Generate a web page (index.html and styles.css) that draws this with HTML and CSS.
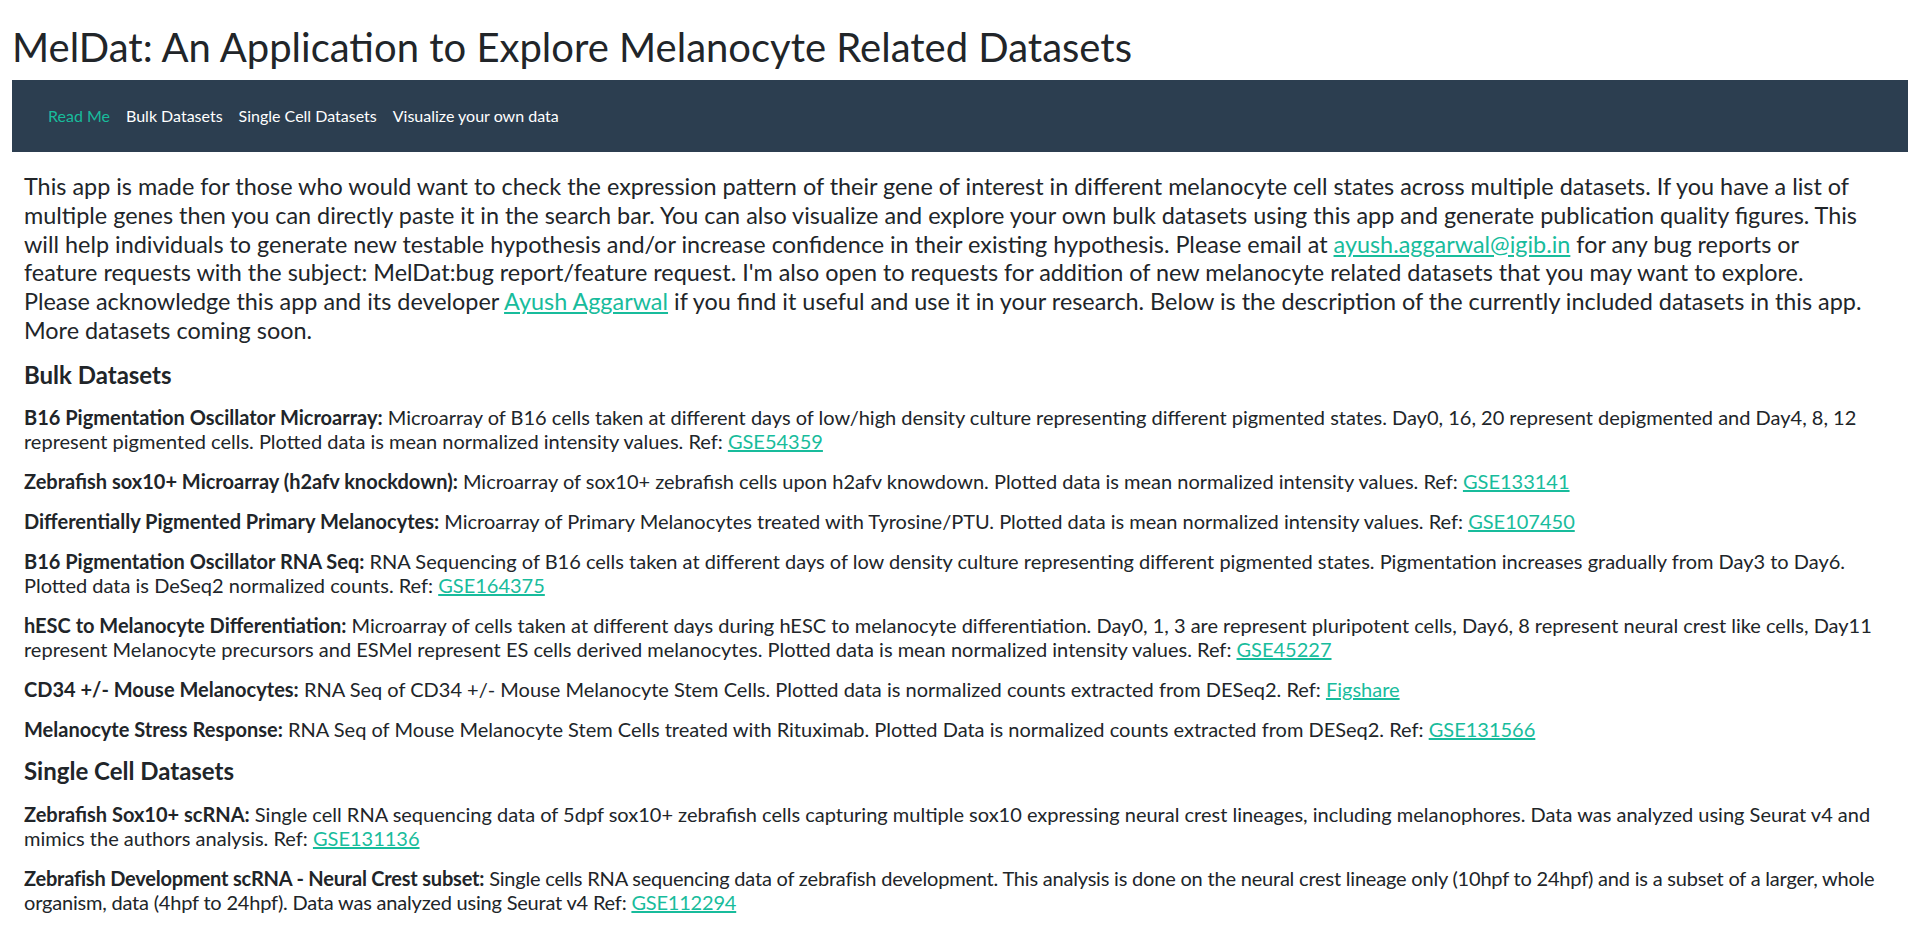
FILE: index.html
```html
<!DOCTYPE html>
<html>
<head>
<meta charset="utf-8">
<title>MelDat</title>
<link rel="stylesheet" href="styles.css">
</head>
<body>
<div class="page">
  <h2 class="title">MelDat: An Application to Explore Melanocyte Related Datasets</h2>
  <nav class="navbar">
    <ul class="nav">
      <li><a class="active">Read Me</a></li>
      <li><a>Bulk Datasets</a></li>
      <li><a>Single Cell Datasets</a></li>
      <li><a>Visualize your own data</a></li>
    </ul>
  </nav>
  <div class="content">
    <p class="intro">This app is made for those who would want to check the expression pattern of their gene of interest in different melanocyte cell states across multiple datasets. If you have a list of multiple genes then you can directly paste it in the search bar. You can also visualize and explore your own bulk datasets using this app and generate publication quality figures. This will help individuals to generate new testable hypothesis and/or increase confidence in their existing hypothesis. Please email at <a href="#">ayush.aggarwal@igib.in</a> for any bug reports or<br>feature requests with the subject: MelDat:bug report/feature request. I'm also open to requests for addition of new melanocyte related datasets that you may want to explore.<br>Please acknowledge this app and its developer <a href="#">Ayush Aggarwal</a> if you find it useful and use it in your research. Below is the description of the currently included datasets in this app.<br>More datasets coming soon.</p>

    <h4 class="section">Bulk Datasets</h4>
    <p><b>B16 Pigmentation Oscillator Microarray:</b> Microarray of B16 cells taken at different days of low/high density culture representing different pigmented states. Day0, 16, 20 represent depigmented and Day4, 8, 12 represent pigmented cells. Plotted data is mean normalized intensity values. Ref: <a href="#">GSE54359</a></p>
    <p><b>Zebrafish sox10+ Microarray (h2afv knockdown):</b> Microarray of sox10+ zebrafish cells upon h2afv knowdown. Plotted data is mean normalized intensity values. Ref: <a href="#">GSE133141</a></p>
    <p><b>Differentially Pigmented Primary Melanocytes:</b> Microarray of Primary Melanocytes treated with Tyrosine/PTU. Plotted data is mean normalized intensity values. Ref: <a href="#">GSE107450</a></p>
    <p><b>B16 Pigmentation Oscillator RNA Seq:</b> RNA Sequencing of B16 cells taken at different days of low density culture representing different pigmented states. Pigmentation increases gradually from Day3 to Day6. Plotted data is DeSeq2 normalized counts. Ref: <a href="#">GSE164375</a></p>
    <p><b>hESC to Melanocyte Differentiation:</b> Microarray of cells taken at different days during hESC to melanocyte differentiation. Day0, 1, 3 are represent pluripotent cells, Day6, 8 represent neural crest like cells, Day11 represent Melanocyte precursors and ESMel represent ES cells derived melanocytes. Plotted data is mean normalized intensity values. Ref: <a href="#">GSE45227</a></p>
    <p><b>CD34 +/- Mouse Melanocytes:</b> RNA Seq of CD34 +/- Mouse Melanocyte Stem Cells. Plotted data is normalized counts extracted from DESeq2. Ref: <a href="#">Figshare</a></p>
    <p><b>Melanocyte Stress Response:</b> RNA Seq of Mouse Melanocyte Stem Cells treated with Rituximab. Plotted Data is normalized counts extracted from DESeq2. Ref: <a href="#">GSE131566</a></p>

    <h4 class="section">Single Cell Datasets</h4>
    <p><b>Zebrafish Sox10+ scRNA:</b> Single cell RNA sequencing data of 5dpf sox10+ zebrafish cells capturing multiple sox10 expressing neural crest lineages, including melanophores. Data was analyzed using Seurat v4 and mimics the authors analysis. Ref: <a href="#">GSE131136</a></p>
    <p class="tight"><b>Zebrafish Development scRNA - Neural Crest subset:</b> Single cells RNA sequencing data of zebrafish development. This analysis is done on the neural crest lineage only (10hpf to 24hpf) and is a subset of a larger, whole organism, data (4hpf to 24hpf). Data was analyzed using Seurat v4 Ref: <a href="#">GSE112294</a></p>
  </div>
</div>
</body>
</html>
```

FILE: styles.css
```css
html, body {
  margin: 0;
  padding: 0;
  background: #ffffff;
}
body {
  font-family: Lato, "Liberation Sans", sans-serif;
  font-size: 20px;
  line-height: 24px;
  color: #212529;
}
.page {
  padding: 0 12px;
}
.title {
  font-size: 40px;
  font-weight: 400;
  line-height: 1.2;
  margin: 0;
  padding-top: 23px;
  padding-bottom: 9px;
}
.navbar {
  background: #2c3e50;
  height: 72px;
  box-sizing: border-box;
  display: flex;
  align-items: center;
  padding: 0 0 0 28px;
}
.nav {
  list-style: none;
  margin: 0;
  padding: 0;
  display: flex;
}
.nav a {
  display: block;
  color: #ffffff;
  font-size: 16px;
  line-height: 24px;
  padding: 8px 8px;
  text-decoration: none;
  cursor: pointer;
}
.nav a.active {
  color: #18bc9c;
}
.content {
  padding: 20px 12px 0 12px;
}
a {
  color: #18bc9c;
  text-decoration: underline;
}
.intro {
  font-size: 23.4px;
  line-height: 28.75px;
  margin: 0 0 16px 0;
}
.section {
  font-size: 24px;
  font-weight: 700;
  line-height: 28.8px;
  margin: 0 0 16px 0;
}
p {
  margin: 0 0 16px 0;
}
p.tight {
  letter-spacing: -0.2px;
}
b {
  font-weight: 700;
}
```
